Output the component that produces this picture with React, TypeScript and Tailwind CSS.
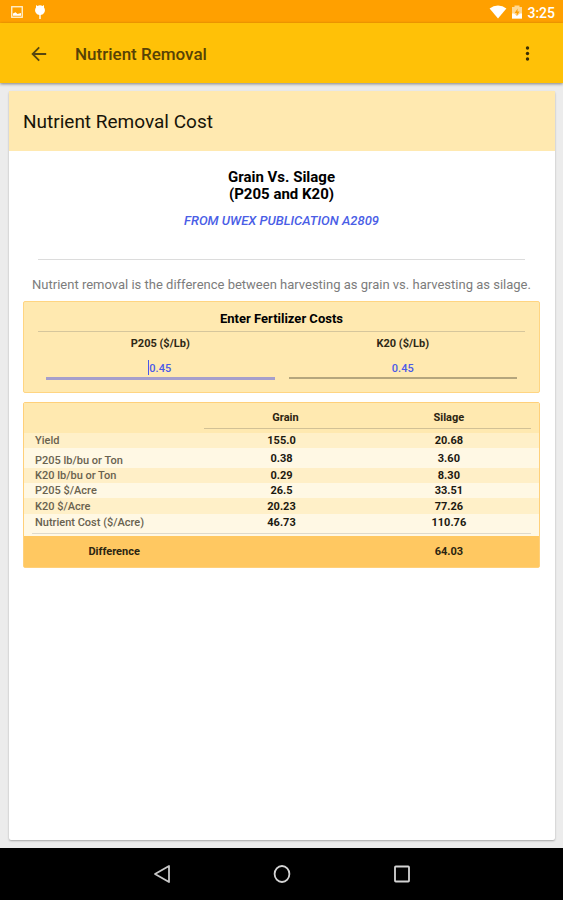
import { useState } from 'react';

interface ResultRow {
  label: string;
  grain: string;
  silage: string;
  className: string;
}

const rows: ResultRow[] = [
  { label: 'Yield', grain: '155.0', silage: '20.68', className: 'h-[15px] bg-[#fff0c8]' },
  { label: 'P205 lb/bu or Ton', grain: '0.38', silage: '3.60', className: 'h-5 bg-[#fff8e4]' },
  { label: 'K20 lb/bu or Ton', grain: '0.29', silage: '8.30', className: 'h-[15px] bg-[#ffefc7]' },
  { label: 'P205 $/Acre', grain: '26.5', silage: '33.51', className: 'h-[15px] bg-[#fff8e4]' },
  { label: 'K20 $/Acre', grain: '20.23', silage: '77.26', className: 'h-4 bg-[#fff0c8]' },
  { label: 'Nutrient Cost ($/Acre)', grain: '46.73', silage: '110.76', className: 'h-4 bg-[#fff8e4]' },
];

function StatusBar() {
  return (
    <div className="flex h-[23px] items-center justify-between bg-[#ffa000] px-2 pt-px text-white">
      <div className="flex items-center gap-3 pl-[3px]">
        <svg width="12" height="12" viewBox="0 0 12 12" aria-hidden="true">
          <rect x="0.75" y="0.75" width="10.5" height="10.5" fill="none" stroke="#fff3d9" strokeWidth="1.3" />
          <path d="M2 9.8V7.5l2.5-1.2 2 1.7L10 7v2.8z" fill="#fff" />
        </svg>
        <svg width="10" height="14" viewBox="0 0 10 14" aria-hidden="true">
          <path d="M1 0l1.4 1.1a5 5 0 0 1 5.2 0L9 0v2.6a4.6 4.6 0 0 1-3.3 7.3V14H4.3V9.9A4.6 4.6 0 0 1 1 2.6z" fill="#fff" />
        </svg>
      </div>
      <div className="flex items-center">
        <svg width="18" height="14" viewBox="0 0 18 14" aria-hidden="true">
          <path d="M9 13.5L.6 3.4a13.4 13.4 0 0 1 16.8 0z" fill="#fff" />
        </svg>
        <svg className="ml-1" width="12" height="14" viewBox="0 0 12 14" aria-hidden="true">
          <path d="M1 2h2.5V.5h5V2H11v11.5H1z" fill="#ffd894" />
          <path d="M1 8.5h2l3 2.5 3-2.5h2v5H1z" fill="#fff" />
          <path d="M6.6 3.5L3.7 8h2v3l2.8-4.5h-2z" fill="#ffa000" />
        </svg>
        <span className="ml-1 pt-px text-[14px] font-medium leading-4">3:25</span>
      </div>
    </div>
  );
}

function AppBar() {
  return (
    <header className="relative flex h-[60px] items-center bg-[#ffc107] pl-[31px] pr-5 pt-[2px] shadow-[0_1px_3px_rgba(0,0,0,0.45)]">
      <button type="button" aria-label="Back" className="p-0">
        <svg width="16" height="16" viewBox="0 0 16 16" fill="none" stroke="#574610" strokeWidth="1.8">
          <path d="M15.2 8H2M8.2 1.4L1.6 8l6.6 6.6" />
        </svg>
      </button>
      <h1 className="ml-7 flex-1 text-[17px] font-medium leading-6 text-[#574205]">Nutrient Removal</h1>
      <button type="button" aria-label="More options" className="p-0">
        <svg width="30" height="18" viewBox="0 0 30 18" fill="#3c2f04">
          <circle cx="14.5" cy="3" r="1.7" />
          <circle cx="14.5" cy="8.5" r="1.7" />
          <circle cx="14.5" cy="14" r="1.7" />
        </svg>
      </button>
    </header>
  );
}

function FertilizerCosts() {
  const [p205, setP205] = useState('0.45');
  const [k20, setK20] = useState('0.45');

  return (
    <section className="rounded-xs border border-[#ffd582] bg-[#ffe9b0] px-[14px] pb-3 pt-[9px]">
      <h3 className="border-b border-[#d6c69c] pb-1 text-center text-[13px] font-bold leading-4 text-black">
        Enter Fertilizer Costs
      </h3>
      <div className="grid grid-cols-2 gap-[14px] px-2 pt-1">
        <div>
          <label htmlFor="p205" className="block text-center text-[11px] font-bold leading-4 text-[#2e2816]">
            P205 ($/Lb)
          </label>
          <div className="relative mt-2">
            <input
              id="p205"
              value={p205}
              onChange={(e) => setP205(e.target.value)}
              className="block h-5 w-full border-b-3 border-[#a69fcb] bg-transparent text-center text-[11px] font-medium text-[#4a5ae8] outline-none"
            />
            <span className="absolute left-1/2 top-0 -ml-3 h-[15px] w-px bg-[#4a5ae8]" />
          </div>
        </div>
        <div>
          <label htmlFor="k20" className="block text-center text-[11px] font-bold leading-4 text-[#2e2816]">
            K20 ($/Lb)
          </label>
          <input
            id="k20"
            value={k20}
            onChange={(e) => setK20(e.target.value)}
            className="mt-2 block h-[19px] w-full border-b-2 border-[#b5a67d] bg-transparent text-center text-[11px] font-medium text-[#4a5ae8] outline-none"
          />
        </div>
      </div>
    </section>
  );
}

function ResultTable() {
  return (
    <div className="mt-[9px] rounded-xs border border-[#ffd07a]">
      <table className="w-full table-fixed border-collapse text-[11px] leading-[15px]">
        <colgroup>
          <col className="w-[35%]" />
          <col className="w-[30%]" />
          <col className="w-[35%]" />
        </colgroup>
        <thead className="bg-[#ffe9b0]">
          <tr className="h-[25px]">
            <td />
            <th scope="col" className="p-0 pl-2 pt-1 font-bold text-[#2b2410]">Grain</th>
            <th scope="col" className="p-0 pt-1 font-bold text-[#2b2410]">Silage</th>
          </tr>
          <tr className="h-[5px]">
            <td />
            <td colSpan={2} className="p-0 pr-2 align-top">
              <hr className="border-[#d2c195]" />
            </td>
          </tr>
        </thead>
        <tbody>
          {rows.map((row) => (
            <tr key={row.label} className={row.className}>
              <th scope="row" className="whitespace-nowrap p-0 pl-[11px] text-left align-bottom font-medium text-[#69624f]">
                {row.label}
              </th>
              <td className="p-0 text-center font-bold text-[#1c1910]">{row.grain}</td>
              <td className="p-0 text-center font-bold text-[#1c1910]">{row.silage}</td>
            </tr>
          ))}
          <tr className="h-[6px] bg-[#fff8e4]">
            <td colSpan={3} className="p-0 px-2">
              <hr className="border-[#dfdacb]" />
            </td>
          </tr>
        </tbody>
        <tfoot className="bg-[#ffc861]">
          <tr className="h-[31px]">
            <th scope="row" className="p-0 font-bold text-[#2b2410]">Difference</th>
            <td />
            <td className="p-0 text-center font-bold text-[#2b2410]">64.03</td>
          </tr>
        </tfoot>
      </table>
    </div>
  );
}

function NavigationBar() {
  return (
    <nav className="flex h-[52px] items-center justify-center gap-[102px] bg-black">
      <button type="button" aria-label="Back">
        <svg width="18" height="20" viewBox="0 0 18 20" fill="none" stroke="#c8c8c8" strokeWidth="1.8" strokeLinejoin="round">
          <path d="M16 2v16L2 10z" />
        </svg>
      </button>
      <button type="button" aria-label="Home">
        <svg width="18" height="20" viewBox="0 0 18 20" fill="none" stroke="#d4d4d4" strokeWidth="1.8">
          <ellipse cx="9" cy="10" rx="7.4" ry="8" />
        </svg>
      </button>
      <button type="button" aria-label="Recent apps">
        <svg width="18" height="20" viewBox="0 0 18 20" fill="none" stroke="#d4d4d4" strokeWidth="1.8">
          <rect x="2" y="2.5" width="14" height="15" rx="0.8" />
        </svg>
      </button>
    </nav>
  );
}

export default function App() {
  return (
    <div className="flex min-h-screen flex-col bg-[#ececec] font-[Roboto,sans-serif]">
      <StatusBar />
      <AppBar />
      <main className="flex flex-1 flex-col py-2 pl-[9px] pr-2">
        <article className="flex-1 rounded-xs bg-white shadow-[0_1px_2px_rgba(0,0,0,0.3)]">
          <h2 className="flex h-[60px] items-center bg-[#ffe9b0] px-[14px] pt-[2px] text-[19px] leading-6 text-[#171408]">
            Nutrient Removal Cost
          </h2>
          <div className="pl-[14px] pr-[15px] pt-[18px]">
            <p className="text-center text-[15px] font-bold leading-[17px] text-black">
              Grain Vs. Silage
              <br />
              (P205 and K20)
            </p>
            <p className="mt-[10px] text-center text-[13px] font-medium italic leading-4">
              <a href="#a2809" className="text-[#4a5ee6]">FROM UWEX PUBLICATION A2809</a>
            </p>
            <hr className="mx-[15px] mt-[30px] border-[#dcdcdc]" />
            <p className="mb-[7px] mt-4 text-center text-[13px] leading-[18px] text-[#7c7c7c]">
              Nutrient removal is the difference between harvesting as grain vs. harvesting as silage.
            </p>
            <FertilizerCosts />
            <ResultTable />
          </div>
        </article>
      </main>
      <NavigationBar />
    </div>
  );
}
